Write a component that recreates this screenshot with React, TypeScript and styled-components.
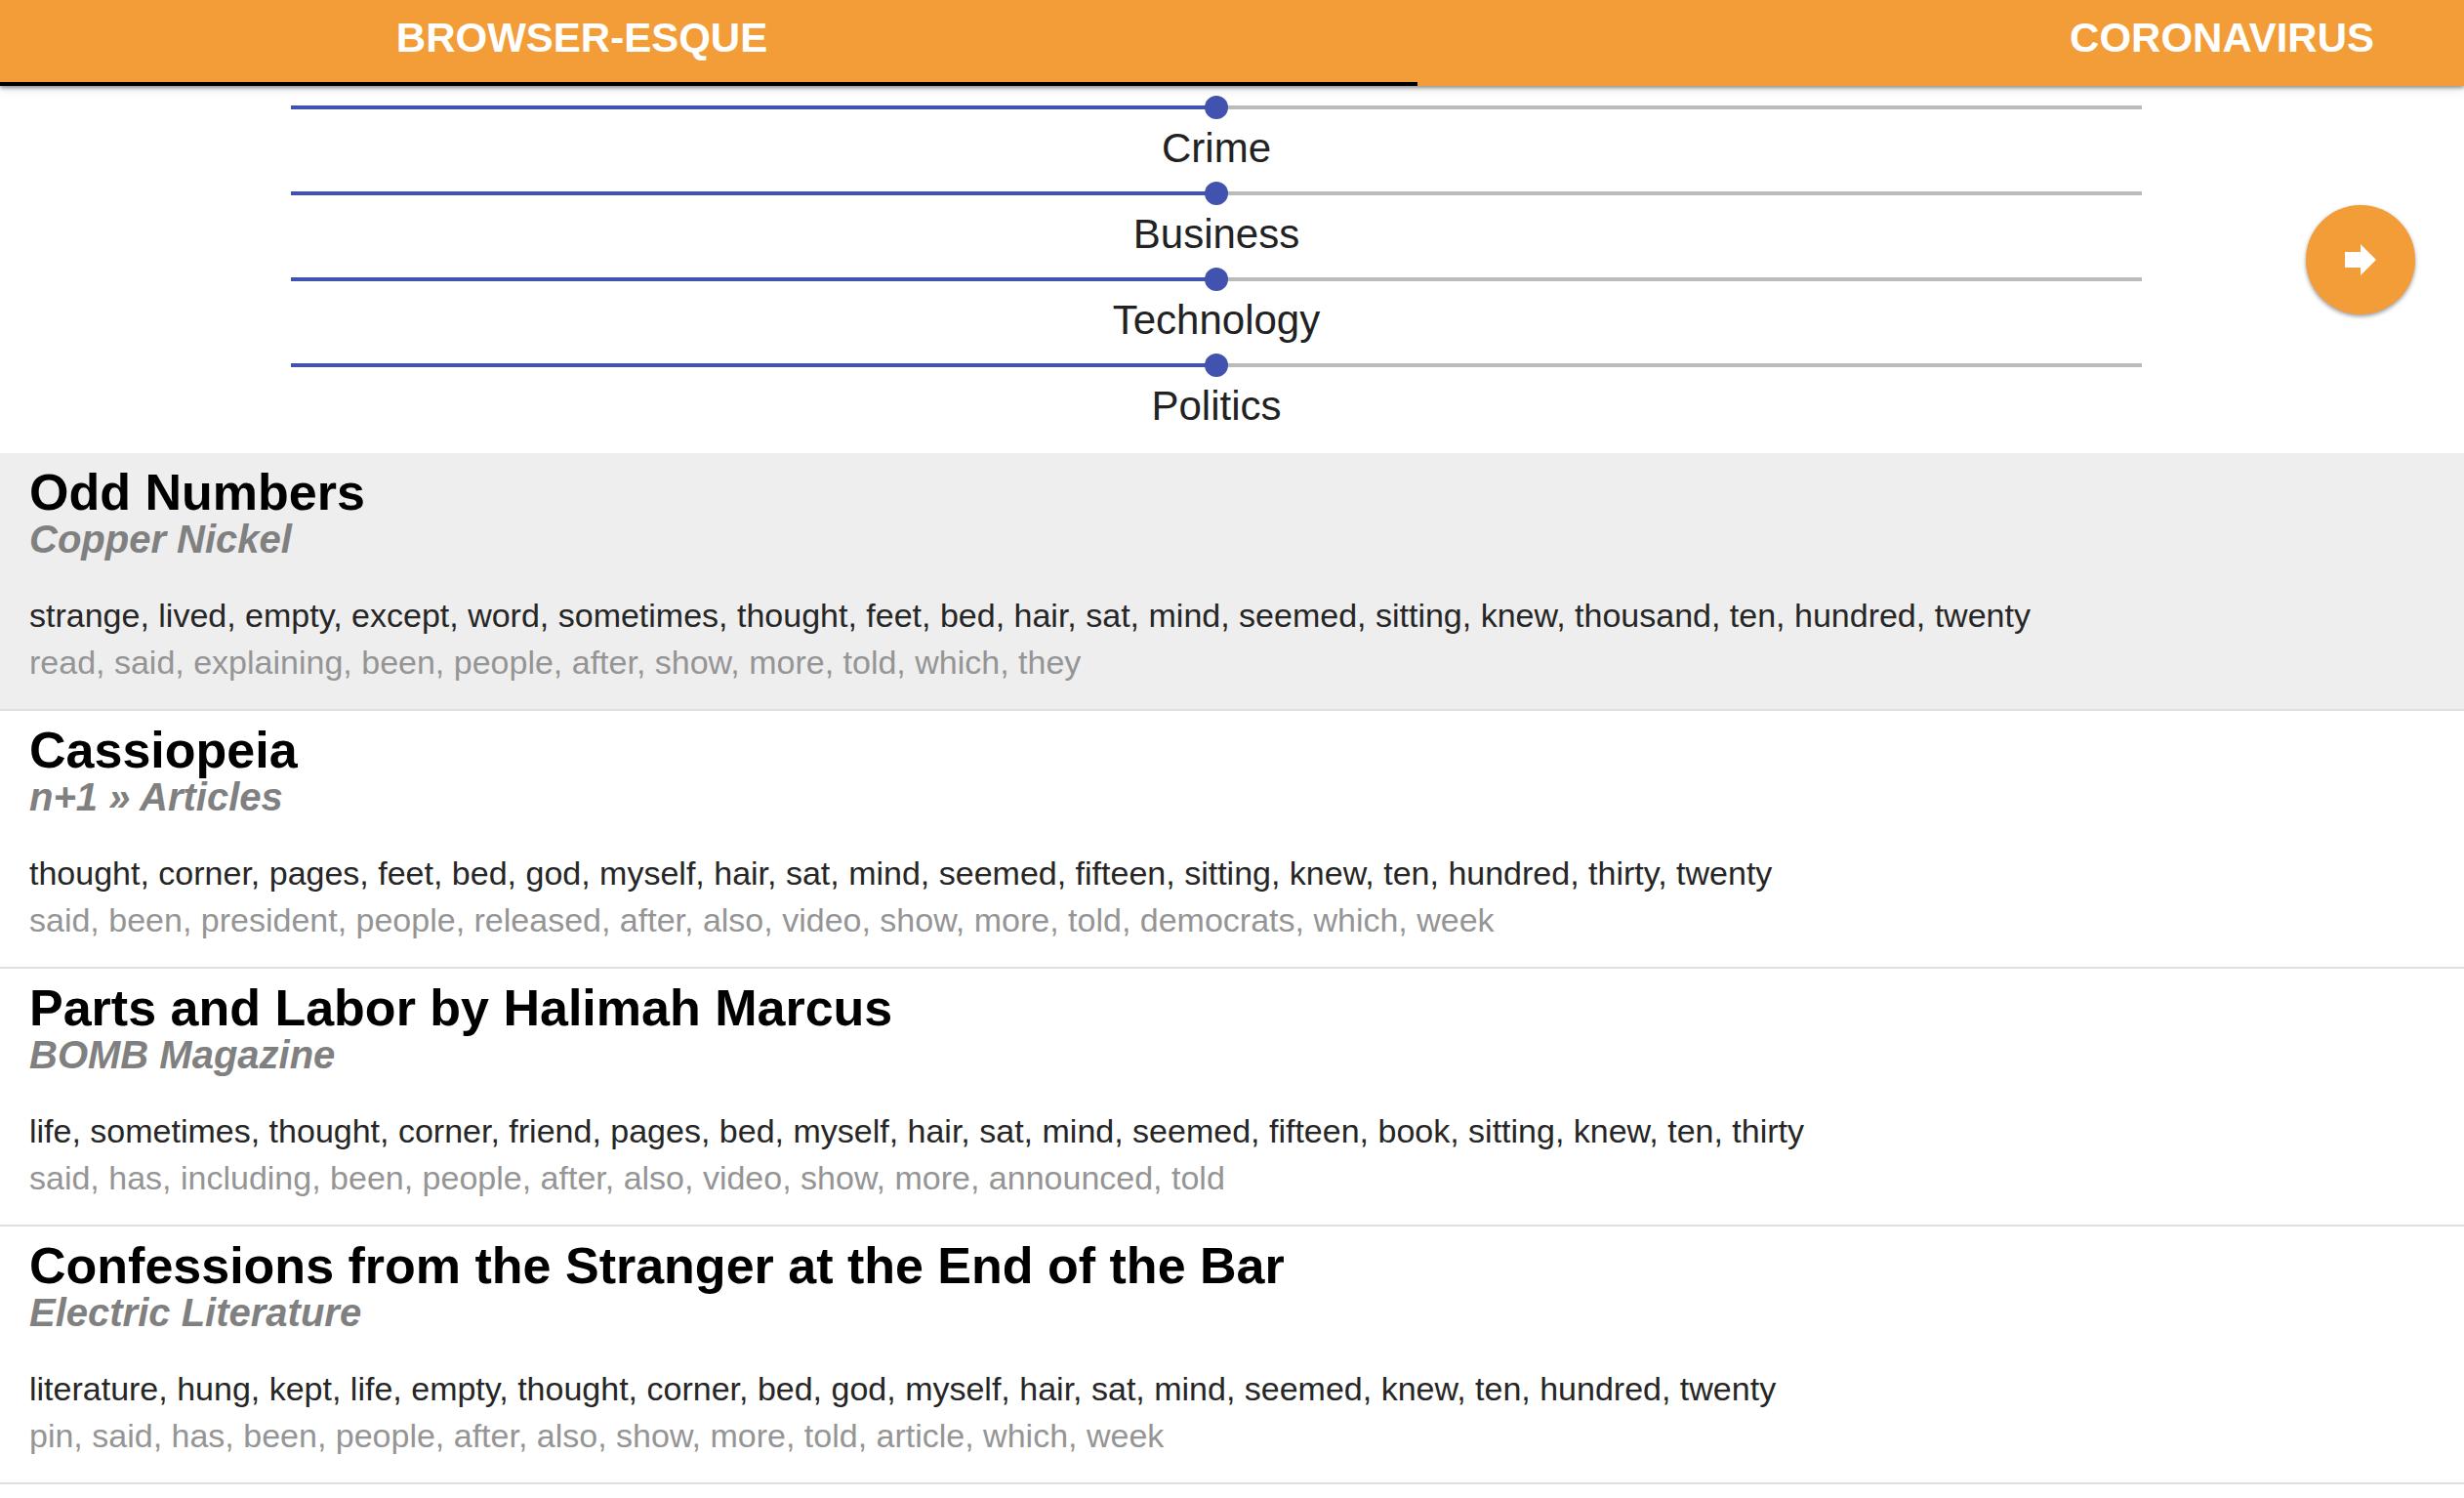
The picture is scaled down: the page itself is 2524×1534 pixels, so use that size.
import React, { useState } from "react";
import styled, { createGlobalStyle } from "styled-components";

const GlobalStyle = createGlobalStyle`
  *, *::before, *::after { box-sizing: border-box; }
  html, body { margin: 0; background: #fff; }
  body {
    font-family: "Liberation Sans", Arial, sans-serif;
    font-size: 34px;
    line-height: 48px;
    color: #222;
  }
`;

const orange = "#f39d38";
const indigo = "#4253af";

const TabBar = styled.nav`
  position: relative;
  display: grid;
  grid-template-columns: 1452fr 1072fr;
  background: ${orange};
  box-shadow: 0 2px 4px rgba(0, 0, 0, 0.4), 0 2px 12px rgba(0, 0, 0, 0.12);
`;

const Tab = styled.button<{ $active?: boolean }>`
  border: 0;
  border-bottom: 4px solid ${(p) => (p.$active ? "#000" : "transparent")};
  padding: ${(p) => (p.$active ? "15px 260px 21px 0" : "15px 92px 21px 0")};
  background: none;
  color: #fff;
  font: bold 42px/48px "Liberation Sans", Arial, sans-serif;
  text-align: ${(p) => (p.$active ? "center" : "right")};
  text-transform: uppercase;
  cursor: pointer;
`;

const Controls = styled.section`
  display: flex;
  align-items: center;
  padding: 0 50px 20px 298px;
`;

const SliderList = styled.div`
  flex: 1;
  display: flex;
  flex-direction: column;
  padding-top: 4px;
`;

const SliderField = styled.label`
  display: flex;
  flex-direction: column;
  height: 88px;
  padding-top: 6px;
  font-size: 42px;
  text-align: center;
`;

const SliderInput = styled.input<{ $value: number }>`
  appearance: none;
  width: 100%;
  height: 24px;
  margin: 0 0 6px;
  background: linear-gradient(
      to right,
      ${indigo} ${(p) => p.$value}%,
      #bbb ${(p) => p.$value}%
    )
    center / 100% 4px no-repeat;
  cursor: pointer;

  &::-webkit-slider-thumb {
    appearance: none;
    width: 24px;
    height: 24px;
    border: 0;
    border-radius: 50%;
    background: ${indigo};
  }
`;

const ButtonColumn = styled.div`
  display: flex;
  justify-content: flex-end;
  width: 280px;
`;

const NextButton = styled.button`
  display: flex;
  align-items: center;
  justify-content: center;
  width: 112px;
  height: 112px;
  padding: 0;
  border: 0;
  border-radius: 50%;
  background: ${orange};
  box-shadow: 0 2px 4px rgba(0, 0, 0, 0.4);
  cursor: pointer;
`;

const ArticleList = styled.main`
  display: flex;
  flex-direction: column;
`;

const Article = styled.article<{ $selected?: boolean }>`
  display: flex;
  flex-direction: column;
  padding: 16px 30px 24px;
  border-bottom: 2px solid #dfdfdf;
  background: ${(p) => (p.$selected ? "#eee" : "#fff")};
`;

const Title = styled.h2`
  margin: 0;
  color: #000;
  font-size: 52px;
  line-height: 48px;
`;

const Source = styled.h3`
  margin: 0 0 30px;
  color: #808080;
  font-size: 40px;
  font-style: italic;
  line-height: 48px;
`;

const Words = styled.p<{ $muted?: boolean }>`
  margin: 0;
  color: ${(p) => (p.$muted ? "#959595" : "#262626")};
`;

const topics = ["Crime", "Business", "Technology", "Politics"];

const articles = [
  {
    title: "Odd Numbers",
    source: "Copper Nickel",
    liked:
      "strange, lived, empty, except, word, sometimes, thought, feet, bed, hair, sat, mind, seemed, sitting, knew, thousand, ten, hundred, twenty",
    disliked: "read, said, explaining, been, people, after, show, more, told, which, they",
  },
  {
    title: "Cassiopeia",
    source: "n+1 » Articles",
    liked:
      "thought, corner, pages, feet, bed, god, myself, hair, sat, mind, seemed, fifteen, sitting, knew, ten, hundred, thirty, twenty",
    disliked:
      "said, been, president, people, released, after, also, video, show, more, told, democrats, which, week",
  },
  {
    title: "Parts and Labor by Halimah Marcus",
    source: "BOMB Magazine",
    liked:
      "life, sometimes, thought, corner, friend, pages, bed, myself, hair, sat, mind, seemed, fifteen, book, sitting, knew, ten, thirty",
    disliked: "said, has, including, been, people, after, also, video, show, more, announced, told",
  },
  {
    title: "Confessions from the Stranger at the End of the Bar",
    source: "Electric Literature",
    liked:
      "literature, hung, kept, life, empty, thought, corner, bed, god, myself, hair, sat, mind, seemed, knew, ten, hundred, twenty",
    disliked: "pin, said, has, been, people, after, also, show, more, told, article, which, week",
  },
];

function TopicSlider({ name }: { name: string }) {
  const [value, setValue] = useState(50);
  return (
    <SliderField>
      <SliderInput
        type="range"
        min={0}
        max={100}
        value={value}
        $value={value}
        onChange={(e) => setValue(Number(e.target.value))}
      />
      {name}
    </SliderField>
  );
}

export default function App() {
  return (
    <>
      <GlobalStyle />
      <TabBar>
        <Tab $active>Browser-esque</Tab>
        <Tab>Coronavirus</Tab>
      </TabBar>
      <Controls>
        <SliderList>
          {topics.map((name) => (
            <TopicSlider key={name} name={name} />
          ))}
        </SliderList>
        <ButtonColumn>
          <NextButton aria-label="Next">
            <svg width="32" height="32" viewBox="0 0 32 32" aria-hidden="true">
              <path d="M0 8H16V0L32 16L16 32V24H0Z" fill="#fff" />
            </svg>
          </NextButton>
        </ButtonColumn>
      </Controls>
      <ArticleList>
        {articles.map((a, i) => (
          <Article key={a.title} $selected={i === 0}>
            <Title>{a.title}</Title>
            <Source>{a.source}</Source>
            <Words>{a.liked}</Words>
            <Words $muted>{a.disliked}</Words>
          </Article>
        ))}
      </ArticleList>
    </>
  );
}
